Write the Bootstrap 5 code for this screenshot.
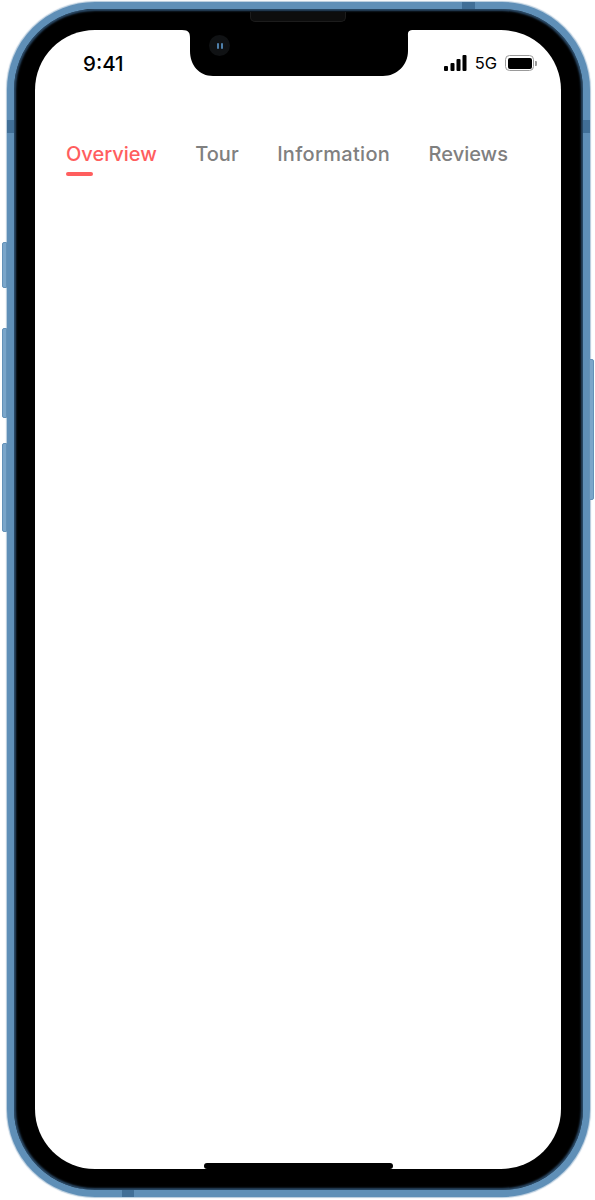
<!DOCTYPE html>
<html lang="en">
<head>
<meta charset="utf-8">
<title>Overview</title>
<link href="https://cdn.jsdelivr.net/npm/bootstrap@5.3.0/dist/css/bootstrap.min.css" rel="stylesheet">
<style>
html, body { background: #fff; }
body { margin: 0; height: 1200px; overflow: hidden; font-family: Inter, "Liberation Sans", sans-serif; }
.stage { height: 1200px; padding: 2px 5px 3px 7px; }
.phone {
  height: 1195px; background: #000; border: 7px solid #5f8fb7; border-radius: 88px; padding: 21px 22px 21px 21px;
  box-shadow: 0 0 1px .5px rgba(150,180,205,.7), inset 0 0 2px 2px #2a4a68;
}
.screen { height: 100%; background: #fff; border-radius: 60px; overflow: hidden; }
.side-key { background: #7ba6ca; border: 1px solid #6492b8; }
.key-a { left: -12px; top: 233px; width: 5px; height: 46px; border-radius: 2px 0 0 2px; }
.key-b { left: -12px; top: 319px; width: 5px; height: 90px; border-radius: 2px 0 0 2px; }
.key-c { left: -12px; top: 434px; width: 5px; height: 89px; border-radius: 2px 0 0 2px; }
.key-d { right: -11px; top: 350px; width: 5px; height: 141px; border-radius: 0 2px 2px 0; }
.band { background: #416f97; }
.band-l { left: -7px; top: 111px; width: 7px; height: 13px; }
.band-r { right: -7px; top: 111px; width: 7px; height: 13px; }
.band-t { left: 448px; top: -7px; width: 13px; height: 7px; }
.band-b { left: 108px; bottom: -7px; width: 12px; height: 7px; }
.notch { left: 168px; top: 21px; width: 232px; height: 46px; }
.speaker { left: 236px; top: 3px; width: 96px; height: 10px; background: #0d0d0d; border: 1px solid #1c1c1c; border-top: 0; border-radius: 0 0 5px 5px; }
.camera { left: 195px; top: 26px; width: 21px; height: 21px; background: #101214; border-radius: 50%; gap: 2px; }
.lens { width: 2px; height: 6px; background: #4f80ab; border-radius: 1px; }
.status-row { height: 66px; padding: 0 24px 0 48px; color: #000; }
.clock { font-size: 20.5px; font-weight: 500; line-height: 1; margin-top: 2px; }
.network { font-size: 16.5px; line-height: 1; margin: 0 8px; }
.battery { width: 29px; height: 16px; padding: 1.5px; border: 1.5px solid #9a9a9a; border-radius: 4.5px; }
.battery-fill { background: #000; border-radius: 2px; }
.battery-nub { width: 2px; height: 5px; background: #9a9a9a; border-radius: 0 1px 1px 0; margin-left: 1px; }
.tabs { padding-left: 31px; margin-top: 46px; gap: 38.5px; }
.tabs .nav-link { padding: 0; font-size: 20px; font-weight: 500; line-height: 24px; color: #808080; }
.tabs .nav-link.active { color: #ff5e5e; }
.tabs .tab-wide { letter-spacing: .3px; }
.tab-mark { width: 27px; height: 4px; margin-top: 6px; background: #ff5e5e; border-radius: 2px; }
.home-bar { width: 189px; height: 6px; margin-left: 169px; background: #000; border-radius: 3px; }
</style>
</head>
<body>
<div class="stage">
  <div class="phone position-relative">
    <span class="side-key key-a position-absolute"></span>
    <span class="side-key key-b position-absolute"></span>
    <span class="side-key key-c position-absolute"></span>
    <span class="side-key key-d position-absolute"></span>
    <span class="band band-l position-absolute"></span>
    <span class="band band-r position-absolute"></span>
    <span class="band band-t position-absolute"></span>
    <span class="band band-b position-absolute"></span>

    <div class="screen d-flex flex-column">
      <div class="status-row d-flex align-items-center justify-content-between flex-shrink-0">
        <span class="clock">9:41</span>
        <div class="d-flex align-items-center">
          <svg width="24" height="16" viewBox="0 0 24 16" aria-hidden="true">
            <rect x="1" y="11" width="4" height="5" rx="1" fill="#000"/>
            <rect x="7.5" y="8" width="4" height="8" rx="1" fill="#000"/>
            <rect x="13.5" y="4" width="4" height="12" rx="1" fill="#000"/>
            <rect x="19.5" y="0" width="4" height="16" rx="1" fill="#000"/>
          </svg>
          <span class="network">5G</span>
          <div class="d-flex align-items-center">
            <div class="battery d-flex"><div class="battery-fill flex-grow-1"></div></div>
            <div class="battery-nub"></div>
          </div>
        </div>
      </div>

      <ul class="nav tabs flex-nowrap">
        <li class="nav-item">
          <a class="nav-link active" href="#">Overview</a>
          <div class="tab-mark"></div>
        </li>
        <li class="nav-item"><a class="nav-link" href="#">Tour</a></li>
        <li class="nav-item"><a class="nav-link tab-wide" href="#">Information</a></li>
        <li class="nav-item"><a class="nav-link" href="#">Reviews</a></li>
      </ul>

      <div class="home-bar mt-auto"></div>
    </div>

    <svg class="notch position-absolute" viewBox="0 0 232 46" aria-hidden="true">
      <path d="M0 0H232C225 0 226 3 226 8V21C226 35 215 46 201 46H31C17 46 8 35 8 21V8C8 3 7 0 0 0Z" fill="#000"/>
    </svg>
    <span class="speaker position-absolute"></span>
    <span class="camera position-absolute d-flex align-items-center justify-content-center"><i class="lens"></i><i class="lens"></i></span>
  </div>
</div>
<script src="https://cdn.jsdelivr.net/npm/bootstrap@5.3.0/dist/js/bootstrap.bundle.min.js"></script>
</body>
</html>
